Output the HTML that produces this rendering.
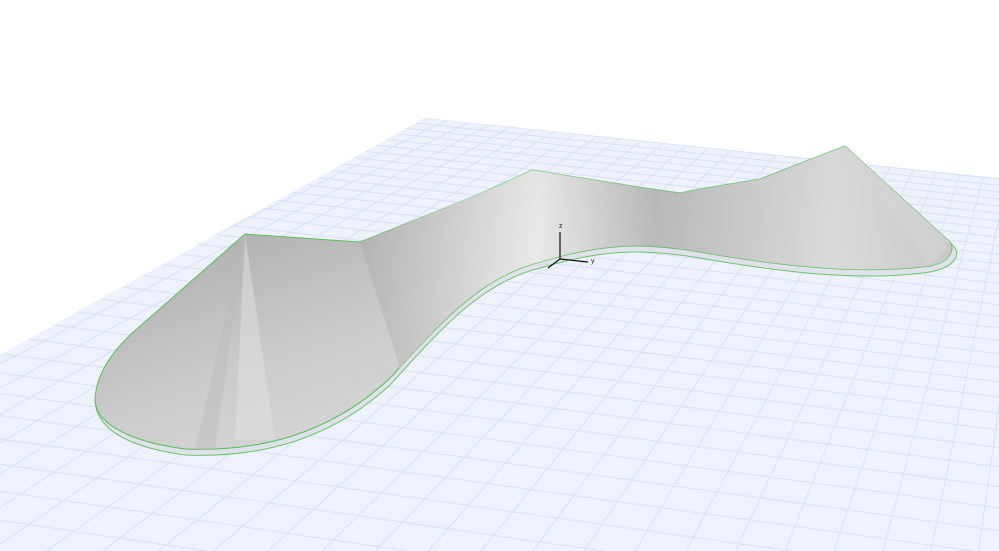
<!DOCTYPE html>
<html><head><meta charset="utf-8"><style>
html,body{margin:0;padding:0;background:#fff;width:999px;height:551px;overflow:hidden}
svg{display:block;position:absolute;left:0;top:0}
</style></head><body>
<svg id="s" width="999" height="551" viewBox="0 0 999 551" xmlns="http://www.w3.org/2000/svg">
<defs>
<linearGradient id="g1" x1="0" y1="0" x2="1" y2="1">
<stop offset="0" stop-color="#999"/><stop offset="0.45" stop-color="#cbcbcb"/><stop offset="1" stop-color="#ececec"/>
</linearGradient>
<linearGradient id="g2" x1="0" y1="0" x2="1" y2="0">
<stop offset="0" stop-color="#b0b0b0"/><stop offset="0.3" stop-color="#f4f4f4"/><stop offset="0.5" stop-color="#b3b3b3"/><stop offset="0.8" stop-color="#dcdcdc"/><stop offset="1" stop-color="#c4c4c4"/>
</linearGradient>
<clipPath id="pc"><polygon points="425,118 999,178 999,551 0,551 0,355"/></clipPath>
</defs>
<polygon points="425,118 999,178 999,551 0,551 0,355" fill="#eef2fc"/>
<g id="grid" clip-path="url(#pc)" stroke="#d8e1f7" stroke-width="1" fill="none"></g>
<path d="M95,400 C96,425 120,446 185,455 C260,458 330,440 390,385 C440,330 480,283 540,268 C600,250 640,248 700,258 C780,272 860,282 930,272 C955,267 960,255 955,248 L950,242 C955,250 950,262 930,266 C860,275 780,266 700,252 C640,242 600,244 540,262 C480,277 440,324 390,378 C330,434 260,452 185,449 C120,440 96,420 95,400 Z" fill="#dfe2ea" stroke="#6fc46f" stroke-width="1"/>
<path d="M95,400 C96,420 120,440 185,449 C260,452 330,434 390,378 C440,324 480,277 540,262 C600,244 640,242 700,252 C780,266 860,275 930,266 C950,262 955,250 950,242 L845,146 L760,179 L700,189 L680,193 L638,187 L532,170 L500,185 L460,202 L360,242 L330,240 L245,234 L130,335 C110,355 96,375 95,400 Z" fill="url(#g1)" stroke="#5cbf5c" stroke-width="1"/>
<path d="M360,242 L500,185 L532,170 L638,187 L680,193 L700,189 L760,179 L845,146 L950,242 C955,250 950,262 930,266 C860,275 780,266 700,252 C640,242 600,244 540,262 C480,277 440,324 400,368 L360,242 Z" fill="url(#g2)" opacity="0.75"/>
<path d="M245,234 L235,440 L275,440 Z" fill="#e2e2e2" opacity="0.5"/>
<path d="M245,234 L195,450 L215,450 Z" fill="#b8b8b8" opacity="0.4"/>
<path d="M845,146 L930,266 L950,242 Z" fill="#d6d6d6" opacity="0.6"/>
<g stroke="#111" stroke-width="1.2" fill="none">
<line x1="560" y1="232" x2="560" y2="259"/><line x1="560" y1="259" x2="588" y2="262"/><line x1="560" y1="259" x2="548" y2="268"/>
</g>
<text x="559" y="228" font-family="Liberation Sans,sans-serif" font-size="7" fill="#222">z</text>
<text x="591" y="263" font-family="Liberation Sans,sans-serif" font-size="7" fill="#222">y</text>
</svg>
<script>
function H(src,dst){var A=[],b=[];for(var i=0;i<4;i++){var x=src[i][0],y=src[i][1],X=dst[i][0],Y=dst[i][1];A.push([x,y,1,0,0,0,-X*x,-X*y]);b.push(X);A.push([0,0,0,x,y,1,-Y*x,-Y*y]);b.push(Y);}
var n=8;for(var c=0;c<n;c++){var p=c;for(var r=c+1;r<n;r++)if(Math.abs(A[r][c])>Math.abs(A[p][c]))p=r;var t=A[c];A[c]=A[p];A[p]=t;t=b[c];b[c]=b[p];b[p]=t;for(var r=0;r<n;r++){if(r==c)continue;var f=A[r][c]/A[c][c];for(var k=c;k<n;k++)A[r][k]-=f*A[c][k];b[r]-=f*b[c];}}
var h=[];for(var i=0;i<n;i++)h.push(b[i]/A[i][i]);h.push(1);return h;}
var h=H([[0,0],[1,0],[0,1],[1,1]],[[425,118],[1150,195],[-420,520],[1250,780]]);
function P(u,v){var w=h[6]*u+h[7]*v+1;return [(h[0]*u+h[1]*v+h[2])/w,(h[3]*u+h[4]*v+h[5])/w];}
var g=document.getElementById('grid'),s='';
var NU=32,NV=36;
for(var i=0;i<=NU*1.2;i++){var u=i/NU;var a=P(u,0),c=P(u,1.05);s+='<line x1="'+a[0].toFixed(1)+'" y1="'+a[1].toFixed(1)+'" x2="'+c[0].toFixed(1)+'" y2="'+c[1].toFixed(1)+'"/>';}
for(var j=0;j<=NV*1.05;j++){var v=j/NV;var a=P(-0.2,v),c=P(1.25,v);s+='<line x1="'+a[0].toFixed(1)+'" y1="'+a[1].toFixed(1)+'" x2="'+c[0].toFixed(1)+'" y2="'+c[1].toFixed(1)+'"/>';}
g.innerHTML=s;
</script>
</body></html>
